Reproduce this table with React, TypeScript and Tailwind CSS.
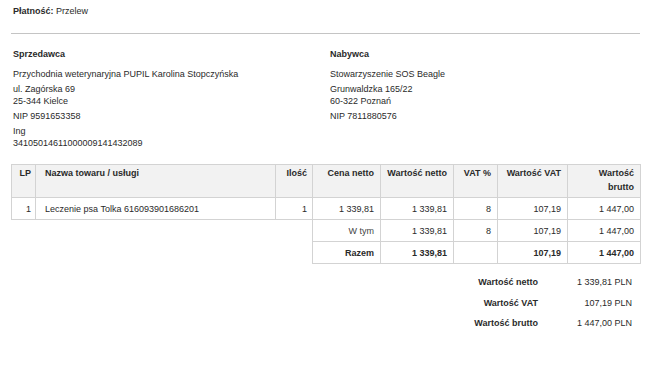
import React from 'react';

const items = [
  {
    lp: '1',
    name: 'Leczenie psa Tolka 616093901686201',
    qty: '1',
    price: '1 339,81',
    net: '1 339,81',
    vat: '8',
    vatValue: '107,19',
    gross: '1 447,00',
  },
];

const th = 'border border-[#d3d3d3] bg-[#f2f2f2] align-top pt-[1px] px-[6px] font-bold text-right';
const td = 'border border-[#d3d3d3] px-[6px] text-right';

export default function App() {
  return (
    <div className="w-[650px] h-[366px] bg-white pl-[11px] pr-[10px] text-[9px] leading-[12px] text-[#2a2a2a] font-['Liberation_Sans',Arial,sans-serif]">
      <div className="pt-[5px] pl-[2px]">
        <span className="font-bold">Płatność:</span> Przelew
      </div>

      <div className="mt-[16px] border-t border-[#c4c4c4]" />

      {/* Seller / buyer */}
      <div className="mt-[14px] pl-[2px] flex">
        <div className="w-[317px]">
          <div className="font-bold">Sprzedawca</div>
          <div className="mt-[8px]">Przychodnia weterynaryjna PUPIL Karolina Stopczyńska</div>
          <div className="mt-[3px]">
            <div>ul. Zagórska 69</div>
            <div>25-344 Kielce</div>
          </div>
          <div className="mt-[3px]">NIP 9591653358</div>
          <div className="mt-[3px]">
            <div>Ing</div>
            <div>34105014611000009141432089</div>
          </div>
        </div>
        <div>
          <div className="font-bold">Nabywca</div>
          <div className="mt-[8px]">Stowarzyszenie SOS Beagle</div>
          <div className="mt-[3px]">
            <div>Grunwaldzka 165/22</div>
            <div>60-322 Poznań</div>
          </div>
          <div className="mt-[3px]">NIP 7811880576</div>
        </div>
      </div>

      {/* Items */}
      <table className="mt-[15px] w-[629px] border-collapse table-fixed">
        <colgroup>
          <col className="w-[24px]" />
          <col className="w-[240px]" />
          <col className="w-[37px]" />
          <col className="w-[68px]" />
          <col className="w-[73px]" />
          <col className="w-[44px]" />
          <col className="w-[70px]" />
          <col className="w-[73px]" />
        </colgroup>
        <thead>
          <tr className="h-[33px] leading-[14px]">
            <th className={th + ' !px-[4px]'}>LP</th>
            <th className={th + ' !text-left !pl-[9px]'}>Nazwa towaru / usługi</th>
            <th className={th + ' !px-[5px]'}>Ilość</th>
            <th className={th}>Cena netto</th>
            <th className={th}>Wartość netto</th>
            <th className={th}>VAT %</th>
            <th className={th}>Wartość VAT</th>
            <th className={th}>Wartość brutto</th>
          </tr>
        </thead>
        <tbody>
          {items.map((it) => (
            <tr key={it.lp} className="h-[22px]">
              <td className={td + ' !px-[4px]'}>{it.lp}</td>
              <td className={td + ' !text-left !pl-[9px]'}>{it.name}</td>
              <td className={td + ' !px-[5px]'}>{it.qty}</td>
              <td className={td}>{it.price}</td>
              <td className={td}>{it.net}</td>
              <td className={td}>{it.vat}</td>
              <td className={td}>{it.vatValue}</td>
              <td className={td}>{it.gross}</td>
            </tr>
          ))}
          <tr className="h-[22px]">
            <td colSpan={3} />
            <td className={td + ' text-[#444]'}>W tym</td>
            <td className={td}>1 339,81</td>
            <td className={td}>8</td>
            <td className={td}>107,19</td>
            <td className={td}>1 447,00</td>
          </tr>
          <tr className="h-[22px] font-bold">
            <td colSpan={3} />
            <td className={td}>Razem</td>
            <td className={td}>1 339,81</td>
            <td className={td}></td>
            <td className={td}>107,19</td>
            <td className={td}>1 447,00</td>
          </tr>
        </tbody>
      </table>

      {/* Summary */}
      <div className="mt-[8px] pr-[8px] flex flex-col items-end leading-[20.5px]">
        <div className="flex">
          <div className="w-[120px] text-right font-bold">Wartość netto</div>
          <div className="w-[94px] text-right">1 339,81 PLN</div>
        </div>
        <div className="flex">
          <div className="w-[120px] text-right font-bold">Wartość VAT</div>
          <div className="w-[94px] text-right">107,19 PLN</div>
        </div>
        <div className="flex">
          <div className="w-[120px] text-right font-bold">Wartość brutto</div>
          <div className="w-[94px] text-right">1 447,00 PLN</div>
        </div>
      </div>
    </div>
  );
}
